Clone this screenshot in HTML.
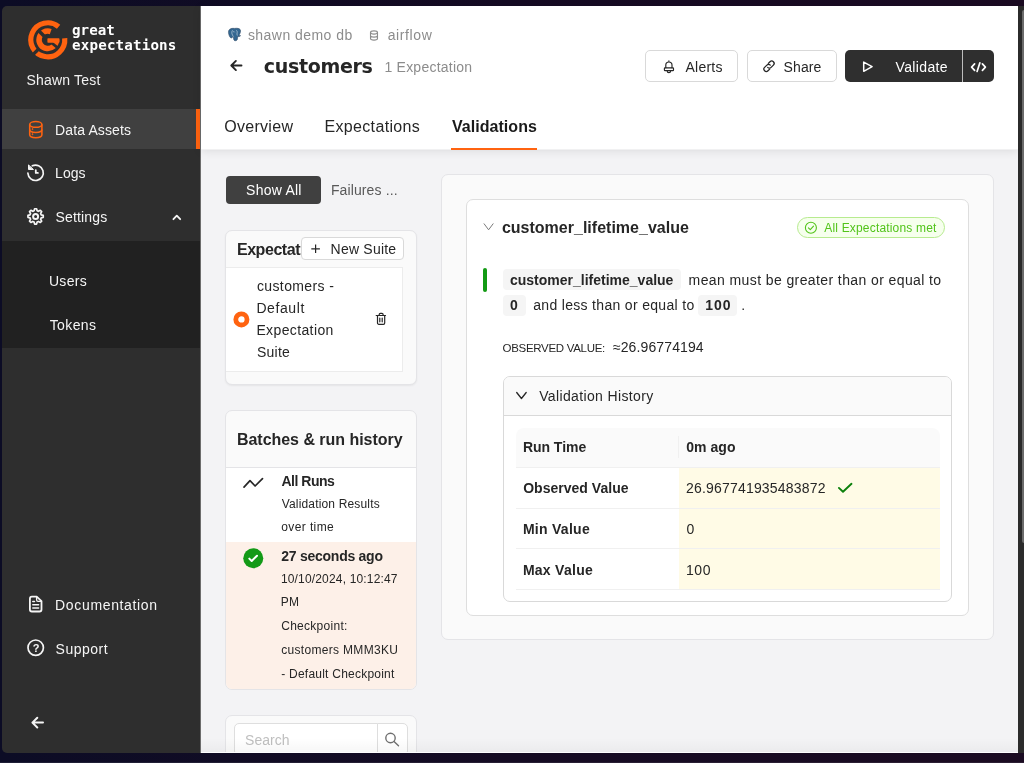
<!DOCTYPE html>
<html lang="en"><head><meta charset="utf-8"><title>customers – Validations | Great Expectations</title>
<style>
html,body{margin:0;padding:0}
body{width:1024px;height:763px;overflow:hidden;position:relative;background:linear-gradient(90deg,#0c0c25 0%,#150b23 50%,#1b0b22 100%);font-family:"Liberation Sans",sans-serif;font-size:14px;color:#262626}
#app{position:absolute;left:0;top:0;width:1024px;height:763px;overflow:hidden;will-change:transform}
.b{position:absolute;box-sizing:border-box}
.t{position:absolute;white-space:nowrap;display:block}
svg{position:absolute;overflow:visible}
.card{background:#fafafa;border:1px solid #e4e4e7;border-radius:7px}
.btn{background:#fff;border:1px solid #d9d9d9;border-radius:5px}
.tag{background:#f5f5f5;border-radius:4px}

</style></head>
<body>
<div id="app">
<div class="b win" style="left:100px;top:6px;width:930.00px;height:746.50px;background:#f3f3f5;"></div>
<nav aria-label="Main navigation">
<div class="b sidebar" style="left:2px;top:6px;width:198.00px;height:746.50px;background:#2e2e2e;border-radius:5px 0 0 5px;"></div>
<div class="b " style="left:200px;top:6px;width:1.00px;height:746.50px;background:#6c6c6c;"></div>
<div class="b " style="left:2px;top:109px;width:198.00px;height:40.00px;background:#404040;"></div>
<div class="b " style="left:196px;top:109px;width:4.00px;height:40.00px;background:#ff6310;"></div>
<div class="b " style="left:2px;top:240.5px;width:198.00px;height:107.00px;background:#212121;"></div>
<svg style="left:27.6px;top:19.7px" width="39.6" height="39.6" viewBox="-19.8 -19.8 39.6 39.6">
<g fill="none" stroke="#ff6310">
<path stroke-width="5.20" d="M16.93 -1.51A17.0 17.0 0 1 1 10.79 -13.14"/>
<path stroke-width="5.50" d="M8.75 0.00A8.75 8.75 0 1 1 2.92 -8.25"/>
</g>
<g stroke="#2e2e2e">
<line x1="0" y1="0" x2="-9.62" y2="-9.62" stroke-width="3.4"/>
<line x1="0" y1="0" x2="10.57" y2="8.56" stroke-width="2.7"/>
<line x1="-9.19" y1="9.19" x2="-14.85" y2="14.85" stroke-width="3.3"/>
</g>
<rect x="-0.4" y="-1.5" width="12.1" height="4.5" rx="0.7" fill="#ff6310"/>
</svg>
<span class="t " style="left:72.08px;top:21.60px;font-size:14.2px;line-height:16px;color:#fff;font-weight:700;font-family:'DejaVu Sans Mono','Liberation Mono',monospace;">great</span>
<span class="t " style="left:72.08px;top:37.40px;font-size:14.2px;line-height:16px;color:#fff;letter-spacing:0.16px;font-weight:700;font-family:'DejaVu Sans Mono','Liberation Mono',monospace;">expectations</span>
<span class="t " style="left:26.38px;top:71.70px;font-size:14px;line-height:16px;color:#f2f2f2;letter-spacing:0.21px;">Shawn Test</span>
<span class="t " style="left:55.12px;top:121.50px;font-size:14px;line-height:16px;color:#f5f5f5;letter-spacing:0.12px;">Data Assets</span>
<span class="t " style="left:55.12px;top:165.00px;font-size:14px;line-height:16px;color:#f5f5f5;">Logs</span>
<span class="t " style="left:55.62px;top:208.80px;font-size:14px;line-height:16px;color:#f5f5f5;letter-spacing:0.15px;">Settings</span>
<span class="t " style="left:48.94px;top:272.50px;font-size:14px;line-height:16px;color:#f5f5f5;letter-spacing:0.31px;">Users</span>
<span class="t " style="left:49.69px;top:316.50px;font-size:14px;line-height:16px;color:#f5f5f5;letter-spacing:0.39px;">Tokens</span>
<span class="t " style="left:55.12px;top:597.00px;font-size:14px;line-height:16px;color:#f5f5f5;letter-spacing:0.65px;">Documentation</span>
<span class="t " style="left:55.62px;top:640.50px;font-size:14px;line-height:16px;color:#f5f5f5;letter-spacing:0.49px;">Support</span>
<svg style="left:28px;top:119.5px" width="16" height="19" viewBox="28 119.5 16 19" fill="none" stroke="#ff6310" stroke-width="1.550">
<ellipse cx="35.8" cy="123.9" rx="6.1" ry="2.9"/>
<path d="M29.7 123.9v10.4c0 1.6 2.7 2.9 6.1 2.9s6.1-1.3 6.1-2.9v-10.4"/>
<path d="M29.7 129.1c0 1.6 2.7 2.9 6.1 2.9s6.1-1.3 6.1-2.9"/>
<circle cx="32.5" cy="128.6" r="0.6" fill="#ff6310" stroke-width="0.6"/><circle cx="32.5" cy="133.7" r="0.6" fill="#ff6310" stroke-width="0.6"/>
</svg>
<svg style="left:26px;top:163px" width="20" height="20" viewBox="26 163 20 20" fill="none" stroke="#f5f5f5" stroke-width="1.700" stroke-linecap="round" stroke-linejoin="round">
<path d="M27.900 173.200A7.700 7.700 0 1 0 32.300 165.800"/>
<path d="M28.500 165.300v4.200h4.600z" fill="#f5f5f5" stroke-width="1"/>
<path d="M35.800 170.200v2.700h2.100" stroke-width="1.800"/>
</svg>
<svg style="left:26px;top:207px" width="20" height="20" viewBox="26 207 20 20" fill="none" stroke="#f5f5f5" stroke-width="1.7" stroke-linejoin="round">
<path d="M43.24 215.43 L43.24 217.37 L41.19 217.93 L40.64 219.27 L41.68 221.12 L40.32 222.48 L38.47 221.44 L37.13 221.99 L36.57 224.04 L34.63 224.04 L34.07 221.99 L32.73 221.44 L30.88 222.48 L29.52 221.12 L30.56 219.27 L30.01 217.93 L27.96 217.37 L27.96 215.43 L30.01 214.87 L30.56 213.53 L29.52 211.68 L30.88 210.32 L32.73 211.36 L34.07 210.81 L34.63 208.76 L36.57 208.76 L37.13 210.81 L38.47 211.36 L40.32 210.32 L41.68 211.68 L40.64 213.53 L41.19 214.87Z"/>
<circle cx="35.6" cy="216.4" r="2.500" stroke-width="2"/>
</svg>
<svg style="left:171px;top:212px" width="12" height="10" viewBox="171 212 12 10" fill="none" stroke="#f5f5f5" stroke-width="1.8" stroke-linecap="round" stroke-linejoin="round"><path d="M173.4 219.2l3.4-3.6 3.4 3.6"/></svg>
<svg style="left:28px;top:595px" width="16" height="19" viewBox="28 595 16 19" fill="none" stroke="#f5f5f5" stroke-width="1.800" stroke-linejoin="round" stroke-linecap="round">
<path d="M31.900 596.700h4.800l4.800 4.500v8.300c0 1.100-.9 2-2 2h-7.600c-1.100 0-2-.9-2-2v-10.800c0-1.100.9-2 2-2z"/>
<path d="M36.600 597.300v2.600c0 .8.600 1.400 1.400 1.400h2.700" stroke-width="1.300"/>
<path d="M32.800 601.500h1.700M32.800 604.800h5.800M32.800 608h5.800" stroke-width="1.500"/>
</svg>
<svg style="left:26px;top:638px" width="20" height="20" viewBox="26 638 20 20" fill="none" stroke="#f5f5f5" stroke-width="1.7" stroke-linecap="round">
<circle cx="35.7" cy="647.7" r="7.7"/>
</svg>
<span class="t " style="left:32.70px;top:641.60px;font-size:11px;line-height:12px;color:#f5f5f5;font-weight:700;">?</span>
<svg style="left:30px;top:715px" width="16" height="15" viewBox="30 715 16 15" fill="none" stroke="#f5f5f5" stroke-width="2" stroke-linecap="round" stroke-linejoin="round"><path d="M43 722.600h-10.500M37.300 717.700l-4.900 4.900 4.900 4.900"/></svg>
</nav>
<header>
<div class="b header" style="left:201px;top:6px;width:817.00px;height:143.40px;background:#fff;box-shadow:0 2px 9px rgba(0,0,0,.10);"></div>
<svg style="left:228.2px;top:28px" width="13" height="13" viewBox="0 0 13 13">
<path d="M6.500 .4C4.500 .1 1.600 .4 .7 2.600c-.7 2 .2 4.800 1.200 6.400.7 1.100 1.700 1.300 2.400.5l.9-1c.3 1 .3 2.100.5 2.900.2 1 1.100 1.500 2.100 1.300 1.100-.2 1.600-.9 1.700-1.900l.3-2.400c.8.300 2.100.100 2.600-.4.300-.3 0-.6-.4-.5-.5.100-.9 0-1.100-.2 1.300-1.700 2.100-4 1.400-5.600C11.500.3 9-.0 6.500.4z" fill="#336791" stroke="#26405c" stroke-width=".5" stroke-linejoin="round"/>
<path d="M4.300 2.600c-.5.800-.6 2.300-.3 3.300.3.900.8 1.600 1.200 2.500M8.600 2.500c.6.600.8 1.500.5 2.400-.2.700-.2 1.600.100 2.300M5.300 3.800c.4-.3.900-.3 1.200.100" fill="none" stroke="#d5e3ef" stroke-width=".6" stroke-linecap="round"/>
</svg>
<span class="t " style="left:247.88px;top:26.75px;font-size:14px;line-height:16px;color:#8c8c8c;letter-spacing:0.46px;">shawn demo db</span>
<svg style="left:369px;top:29.500px" width="10" height="11" viewBox="369 29.500 10 11" fill="none" stroke="#8c8c8c" stroke-width="1.100">
<ellipse cx="374" cy="32" rx="3.500" ry="1.600"/><path d="M370.500 32v6c0 .9 1.600 1.600 3.500 1.600s3.500-.7 3.500-1.600v-6M370.500 35c0 .9 1.600 1.600 3.500 1.600s3.500-.7 3.500-1.600"/>
</svg>
<span class="t " style="left:387.69px;top:26.75px;font-size:14px;line-height:16px;color:#8c8c8c;letter-spacing:0.62px;">airflow</span>
<svg style="left:229px;top:59px" width="15" height="14" viewBox="229 59 15 14" fill="none" stroke="#262626" stroke-width="1.900" stroke-linecap="round" stroke-linejoin="round"><path d="M241.500 65.500h-10M235.900 60.900l-4.600 4.600 4.600 4.600"/></svg>
<span class="t " style="left:263.69px;top:55.00px;font-size:19px;line-height:22px;color:#262626;letter-spacing:-0.3px;font-weight:700;font-family:'DejaVu Sans','Liberation Sans',sans-serif;">customers</span>
<span class="t " style="left:384.44px;top:59.25px;font-size:14px;line-height:16px;color:#8c8c8c;letter-spacing:0.23px;">1 Expectation</span>
<span class="t " style="left:224.25px;top:117.75px;font-size:16px;line-height:17px;color:#262626;letter-spacing:0.29px;">Overview</span>
<span class="t " style="left:324.44px;top:117.75px;font-size:16px;line-height:17px;color:#262626;letter-spacing:0.34px;">Expectations</span>
<span class="t " style="left:451.94px;top:117.75px;font-size:16px;line-height:17px;color:#1a1a1a;letter-spacing:0.05px;font-weight:700;">Validations</span>
<div class="b " style="left:201px;top:149px;width:817.00px;height:1.00px;background:#f1f1f2;"></div>
<div class="b " style="left:451.3px;top:148px;width:85.70px;height:2.00px;background:#ff6310;"></div>
<div class="b btn" style="left:645px;top:50px;width:93.00px;height:32.00px;"></div>
<svg style="left:662px;top:59px" width="14" height="15" viewBox="662 59 14 15" fill="none" stroke="#262626" stroke-width="1.150" stroke-linecap="round" stroke-linejoin="round">
<path d="M665.800 67.700v-2.600a3.100 3.100 0 0 1 6.200 0v2.600M668.900 60.700v1.200M667.200 70.900a1.700 1.700 0 0 0 3.400 0"/><rect x="664.400" y="67.900" width="9.100" height="2.700" rx=".6"/>
</svg>
<span class="t " style="left:685.50px;top:58.75px;font-size:14px;line-height:16px;color:#262626;letter-spacing:0.24px;">Alerts</span>
<div class="b btn" style="left:746.75px;top:50px;width:90.00px;height:32.00px;"></div>
<svg style="left:762px;top:60px" width="14" height="13" viewBox="762 60 14 13" fill="none" stroke="#262626" stroke-width="1.300" stroke-linecap="round" stroke-linejoin="round">
<path d="M768.300 63.400l1.700-1.700a2.400 2.400 0 0 1 3.400 3.400l-2.300 2.300a2.400 2.400 0 0 1-3.400 0"/>
<path d="M769.700 69.100l-1.700 1.700a2.400 2.400 0 0 1-3.400-3.400l2.300-2.300a2.400 2.400 0 0 1 3.400 0"/>
</svg>
<span class="t " style="left:783.62px;top:58.75px;font-size:14px;line-height:16px;color:#262626;letter-spacing:0.09px;">Share</span>
<div class="b " style="left:844.8px;top:50px;width:117.20px;height:32.40px;background:#2f2f2f;border-radius:5px 0 0 5px;"></div>
<div class="b " style="left:963px;top:50px;width:31.30px;height:32.40px;background:#2f2f2f;border-radius:0 5px 5px 0;"></div>
<div class="b " style="left:962px;top:50px;width:1.00px;height:32.40px;background:#bdbdbd;"></div>
<svg style="left:862px;top:60px" width="13" height="13" viewBox="862 60 13 13" fill="none" stroke="#fff" stroke-width="1.500" stroke-linejoin="round"><path d="M863.700 62.100v9.200l8.400-4.600z"/></svg>
<span class="t " style="left:895.54px;top:58.85px;font-size:14px;line-height:16px;color:#fff;letter-spacing:0.36px;">Validate</span>
<svg style="left:970px;top:61px" width="17" height="12" viewBox="970 61 17 12" fill="none" stroke="#fff" stroke-width="1.700" stroke-linecap="round" stroke-linejoin="round"><path d="M974.600 63.900l-3 3.200 3 3.200M982.400 63.900l3 3.200-3 3.200M979.900 62.800l-2.800 8.600"/></svg>
</header>
<aside aria-label="Suites and runs">
<div class="b " style="left:226.25px;top:175.75px;width:94.50px;height:28.00px;background:#404040;border-radius:4px;"></div>
<span class="t " style="left:246.12px;top:182.00px;font-size:14px;line-height:16px;color:#fff;letter-spacing:0.23px;">Show All</span>
<span class="t " style="left:330.88px;top:182.00px;font-size:14px;line-height:16px;color:#595959;letter-spacing:0.12px;">Failures ...</span>
<div class="b card" style="left:225px;top:230px;width:191.50px;height:155.00px;box-shadow:0 1px 2px rgba(0,0,0,.06);overflow:hidden;"><div class="b" style="left:-1px;top:36px;width:177.750px;height:105px;background:#fff;border:1px solid #ececec;border-left:none"></div></div>
<span class="t " style="left:236.94px;top:241.00px;font-size:16px;line-height:17px;color:#262626;letter-spacing:-0.45px;font-weight:700;width:64px;overflow:hidden;">Expectation Suites</span>
<div class="b btn" style="left:301.25px;top:237px;width:102.50px;height:23.00px;border-radius:4px;"></div>
<svg style="left:310px;top:244px" width="11" height="11" viewBox="310 244 11 11" fill="none" stroke="#262626" stroke-width="1.200"><path d="M315.600 244.500v8.600M311.300 248.800h8.600"/></svg>
<span class="t " style="left:330.62px;top:241.00px;font-size:14px;line-height:16px;color:#262626;letter-spacing:0.21px;">New Suite</span>
<svg style="left:233px;top:310.500px" width="17" height="17" viewBox="0 0 17 17"><circle cx="8.400" cy="8.400" r="5.600" fill="#fff" stroke="#ff6310" stroke-width="4.800"/></svg>
<span class="t " style="left:256.94px;top:278.25px;font-size:14px;line-height:16px;color:#262626;letter-spacing:0.38px;">customers -</span>
<span class="t " style="left:256.38px;top:300.00px;font-size:14px;line-height:16px;color:#262626;letter-spacing:0.59px;">Default</span>
<span class="t " style="left:256.38px;top:322.00px;font-size:14px;line-height:16px;color:#262626;letter-spacing:0.38px;">Expectation</span>
<span class="t " style="left:256.88px;top:344.00px;font-size:14px;line-height:16px;color:#262626;letter-spacing:0.27px;">Suite</span>
<svg style="left:375px;top:312px" width="12" height="14" viewBox="375 312 12 14" fill="none" stroke="#262626" stroke-width="1.200" stroke-linejoin="round" stroke-linecap="round">
<path d="M376.200 315.500h9.300M379.200 315.300v-.7a1.200 1.200 0 0 1 1.200-1.200h1.500a1.200 1.200 0 0 1 1.200 1.200v.7M377.500 315.700v7.300a1.300 1.300 0 0 0 1.300 1.300h4.600a1.300 1.300 0 0 0 1.300-1.300v-7.300M379.800 318.100v3.700M382.200 318.100v3.700"/>
</svg>
<div class="b card" style="left:225px;top:410px;width:191.50px;height:280.00px;overflow:hidden;"><div class="b" style="left:-1px;top:56px;width:192px;height:75px;background:#fff;border-top:1px solid #e4e4e7"></div><div class="b" style="left:-1px;top:131px;width:192px;height:150px;background:#fdf0e8"></div></div>
<span class="t " style="left:236.94px;top:430.50px;font-size:16px;line-height:17px;color:#262626;letter-spacing:-0.03px;font-weight:700;">Batches &amp; run history</span>
<svg style="left:242px;top:476px" width="23" height="13" viewBox="242 476 23 13" fill="none" stroke="#262626" stroke-width="1.700" stroke-linecap="round" stroke-linejoin="round"><path d="M244 487.100L250 480.700L255.100 486L262.500 478.600"/></svg>
<span class="t " style="left:281.44px;top:473.00px;font-size:14px;line-height:16px;color:#262626;letter-spacing:-0.49px;font-weight:700;">All Runs</span>
<span class="t " style="left:281.75px;top:496.50px;font-size:12px;line-height:14px;color:#262626;letter-spacing:0.16px;">Validation Results</span>
<span class="t " style="left:281.25px;top:520.25px;font-size:12px;line-height:14px;color:#262626;letter-spacing:0.39px;">over time</span>
<svg style="left:243px;top:548px" width="21" height="21" viewBox="0 0 21 21"><circle cx="10.250" cy="10.250" r="10" fill="#139a17"/><path d="M6.300 10.600l2.400 2.400 5.300-5.300" fill="none" stroke="#fff" stroke-width="2" stroke-linecap="round" stroke-linejoin="round"/></svg>
<span class="t " style="left:281.31px;top:548.25px;font-size:14px;line-height:16px;color:#262626;letter-spacing:-0.26px;font-weight:700;">27 seconds ago</span>
<span class="t " style="left:280.88px;top:571.50px;font-size:12px;line-height:14px;color:#262626;letter-spacing:0.17px;">10/10/2024, 10:12:47</span>
<span class="t " style="left:280.81px;top:595.25px;font-size:12px;line-height:14px;color:#262626;letter-spacing:0.2px;">PM</span>
<span class="t " style="left:281.19px;top:619.00px;font-size:12px;line-height:14px;color:#262626;letter-spacing:0.28px;">Checkpoint:</span>
<span class="t " style="left:281.25px;top:642.75px;font-size:12px;line-height:14px;color:#262626;letter-spacing:0.31px;">customers MMM3KU</span>
<span class="t " style="left:281.25px;top:666.50px;font-size:12px;line-height:14px;color:#262626;letter-spacing:0.23px;">- Default Checkpoint</span>
<div class="b card" style="left:225px;top:714.5px;width:191.50px;height:85.50px;"></div>
<div class="b btn" style="left:233.75px;top:723px;width:143.75px;height:33.00px;border-radius:5px 0 0 5px;border-color:#dedede;"></div>
<div class="b btn" style="left:376.5px;top:723px;width:31.00px;height:33.00px;border-radius:0 5px 5px 0;border-color:#dedede;"></div>
<span class="t " style="left:245.12px;top:731.50px;font-size:14px;line-height:16px;color:#bfbfbf;letter-spacing:0.03px;">Search</span>
<svg style="left:384px;top:731px" width="17" height="16" viewBox="384 731 17 16" fill="none" stroke="#707070" stroke-width="1.400" stroke-linecap="round"><circle cx="390.500" cy="738" r="4.700"/><path d="M394 741.500l4.500 4.300"/></svg>
</aside>
<main>
<div class="b card" style="left:441px;top:174px;width:553.00px;height:466.00px;"></div>
<div class="b card" style="left:466px;top:199px;width:503.00px;height:416.50px;background:#fff;border-color:#dedede;"></div>
<svg style="left:483px;top:222px" width="12" height="9" viewBox="483 222 12 9" fill="none" stroke="#7a7a7a" stroke-width="1" stroke-linecap="round" stroke-linejoin="round"><path d="M484.100 223.800l4.500 6 4.500-6"/></svg>
<span class="t " style="left:501.88px;top:219.00px;font-size:16px;line-height:17px;color:#262626;letter-spacing:0.01px;font-weight:700;">customer_lifetime_value</span>
<div class="b " style="left:797.25px;top:216.75px;width:147.50px;height:21.50px;background:#f6ffed;border:1px solid #b7eb8f;border-radius:11px;"></div>
<svg style="left:804px;top:221px" width="14" height="14" viewBox="804 221 14 14" fill="none" stroke="#52c41a" stroke-width="1.100" stroke-linecap="round" stroke-linejoin="round"><circle cx="810.900" cy="227.700" r="5.500"/><path d="M808.400 227.800l1.900 1.900 3.200-3.600"/></svg>
<span class="t " style="left:824.25px;top:221.00px;font-size:12px;line-height:14px;color:#52c41a;letter-spacing:0.18px;">All Expectations met</span>
<div class="b " style="left:482.6px;top:268px;width:4.20px;height:24.00px;background:#129a14;border-radius:2.100px;"></div>
<div class="b tag" style="left:502.5px;top:268.5px;width:178.50px;height:21.00px;"></div>
<span class="t " style="left:510.00px;top:272.00px;font-size:14px;line-height:16px;color:#262626;font-weight:700;">customer_lifetime_value</span>
<span class="t " style="left:688.62px;top:272.00px;font-size:14px;line-height:16px;color:#262626;letter-spacing:0.4px;">mean must be greater than or equal to</span>
<div class="b tag" style="left:502.5px;top:294.5px;width:23.75px;height:21.00px;"></div>
<span class="t " style="left:510.00px;top:297.00px;font-size:14px;line-height:16px;color:#262626;font-weight:700;">0</span>
<span class="t " style="left:533.19px;top:297.00px;font-size:14px;line-height:16px;color:#262626;letter-spacing:0.32px;">and less than or equal to</span>
<div class="b tag" style="left:698px;top:294.5px;width:39.00px;height:21.00px;"></div>
<span class="t " style="left:705.33px;top:297.00px;font-size:14px;line-height:16px;color:#262626;letter-spacing:0.93px;font-weight:700;">100</span>
<span class="t " style="left:741.25px;top:297.00px;font-size:14px;line-height:16px;color:#262626;">.</span>
<span class="t " style="left:502.50px;top:342.00px;font-size:11.5px;line-height:12px;color:#262626;letter-spacing:-0.3px;">OBSERVED VALUE:</span>
<span class="t " style="left:612.88px;top:339.00px;font-size:14px;line-height:16px;color:#262626;letter-spacing:0.12px;">≈26.96774194</span>
<div class="b " style="left:503px;top:375.5px;width:449.25px;height:226.75px;background:#fff;border:1px solid #d9d9d9;border-radius:7px;overflow:hidden;"><div class="b" style="left:-1px;top:-1px;width:450px;height:40px;background:#fafafa;border-bottom:1px solid #d9d9d9"></div></div>
<svg style="left:515px;top:391px" width="13" height="10" viewBox="515 391 13 10" fill="none" stroke="#262626" stroke-width="1.300" stroke-linecap="round" stroke-linejoin="round"><path d="M516.700 392.500l4.750 6 4.750-6"/></svg>
<span class="t " style="left:539.19px;top:388.25px;font-size:14px;line-height:16px;color:#262626;letter-spacing:0.36px;">Validation History</span>
<div class="b " style="left:515.5px;top:427.5px;width:424.10px;height:40.00px;background:#fafafa;border-radius:8px 8px 0 0;border-bottom:1px solid #f0f0f0;"></div>
<div class="b " style="left:677.5px;top:436px;width:1.00px;height:21.50px;background:#f0f0f0;"></div>
<div class="b " style="left:678.75px;top:467.5px;width:260.85px;height:121.75px;background:#fffbe6;"></div>
<div class="b " style="left:515.5px;top:507.75px;width:424.10px;height:1.00px;background:#f0f0f0;"></div>
<div class="b " style="left:515.5px;top:548.25px;width:424.10px;height:1.00px;background:#f0f0f0;"></div>
<div class="b " style="left:515.5px;top:588.75px;width:424.10px;height:1.00px;background:#f0f0f0;"></div>
<span class="t " style="left:522.88px;top:439.00px;font-size:14px;line-height:16px;color:#262626;letter-spacing:-0.03px;font-weight:700;">Run Time</span>
<span class="t " style="left:686.25px;top:439.00px;font-size:14px;line-height:16px;color:#262626;letter-spacing:0.05px;font-weight:700;">0m ago</span>
<span class="t " style="left:523.19px;top:479.75px;font-size:14px;line-height:16px;color:#262626;letter-spacing:0.02px;font-weight:700;">Observed Value</span>
<span class="t " style="left:685.91px;top:479.75px;font-size:14px;line-height:16px;color:#262626;letter-spacing:0.2px;">26.967741935483872</span>
<svg style="left:836px;top:481px" width="18" height="14" viewBox="836 481 18 14" fill="none" stroke="#0b800b" stroke-width="1.900" stroke-linecap="round" stroke-linejoin="round"><path d="M838.900 487.900L843 491.800L851.500 483.800"/></svg>
<span class="t " style="left:522.88px;top:520.75px;font-size:14px;line-height:16px;color:#262626;letter-spacing:0.28px;font-weight:700;">Min Value</span>
<span class="t " style="left:686.50px;top:520.75px;font-size:14px;line-height:16px;color:#262626;">0</span>
<span class="t " style="left:522.88px;top:561.50px;font-size:14px;line-height:16px;color:#262626;letter-spacing:0.27px;font-weight:700;">Max Value</span>
<span class="t " style="left:685.94px;top:561.50px;font-size:14px;line-height:16px;color:#262626;letter-spacing:0.62px;">100</span>
</main>
<div class="b " style="left:201px;top:738px;width:817.00px;height:14.50px;background:linear-gradient(180deg,rgba(0,0,0,0) 0%,rgba(0,0,0,.035) 100%);"></div>
<div class="b " style="left:201px;top:752px;width:817.00px;height:1.00px;background:#fdfdfe;"></div>
<div class="b " style="left:1018px;top:6px;width:6.00px;height:746.50px;background:#2b2b2b;"></div>
<div class="b " style="left:1022px;top:10px;width:4.00px;height:533.30px;background:#6b6b6b;border-radius:2px;"></div>
<div class="b " style="left:0px;top:753px;width:1024.00px;height:10.00px;background:linear-gradient(90deg,#0c0c25 0%,#150b23 50%,#1b0b22 100%);"></div>
<div class="b " style="left:0px;top:762px;width:1024.00px;height:1.00px;background:rgba(255,255,255,.08);"></div>
</div>
</body></html>
